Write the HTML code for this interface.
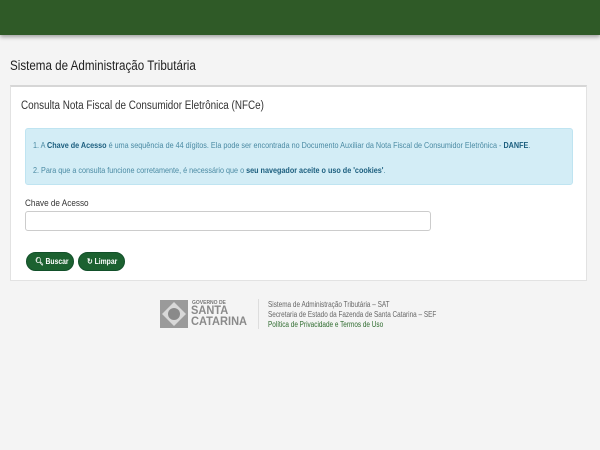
<!DOCTYPE html>
<html><head><meta charset="utf-8"><style>
*{margin:0;padding:0;box-sizing:border-box}
body{width:600px;height:450px;background:#f4f4f4;font-family:"Liberation Sans",sans-serif;position:relative;overflow:hidden;color:#333}
.hdr{position:absolute;left:0;top:0;width:600px;height:35px;background:#2f5a27;box-shadow:0 2px 4px rgba(0,0,0,.35)}
.t{position:absolute;white-space:nowrap;transform-origin:left top;transform:scaleX(.86)}
.panel{position:absolute;left:10px;top:85px;width:577px;height:196px;background:#fff;border:1px solid #e2e2e2;border-top:2px solid #d6d6d6}
.alert{position:absolute;left:25px;top:128px;width:548px;height:57px;background:#d3edf6;border:1px solid #bfe4f1;border-radius:3px}
.alert .t{font-size:8.6px;color:#4a8aa3;transform:scaleX(.84)}
.alert b{color:#1b5e7e}
.inp{position:absolute;left:25px;top:211px;width:406px;height:20px;border:1px solid #ccc;border-radius:3px;background:#fff}
.btn{position:absolute;top:252px;height:19px;background:#1c6130;border:1px solid #12502a;border-radius:10px;color:#fff;font-size:8px;font-weight:bold}
.btn span{position:absolute;top:4px;white-space:nowrap;transform:scaleX(.85);transform-origin:left top}
.ft{font-size:8px;color:#666;transform:scaleX(.8)}
</style></head><body>
<div class="hdr"></div>
<div class="t" style="left:10px;top:58px;font-size:13.5px;color:#222">Sistema de Administração Tributária</div>
<div class="panel"></div>
<div class="t" style="left:21px;top:100px;font-size:11.5px;color:#333">Consulta Nota Fiscal de Consumidor Eletrônica (NFCe)</div>
<div class="alert">
<div class="t" style="left:7px;top:11px">1. A <b>Chave de Acesso</b> é uma sequência de 44 dígitos. Ela pode ser encontrada no Documento Auxiliar da Nota Fiscal de Consumidor Eletrônica - <b>DANFE</b>.</div>
<div class="t" style="left:7px;top:36px">2. Para que a consulta funcione corretamente, é necessário que o <b>seu navegador aceite o uso de 'cookies'</b>.</div>
</div>
<div class="t" style="left:25px;top:198px;font-size:9.5px;color:#333">Chave de Acesso</div>
<div class="inp"></div>
<div class="btn" style="left:26px;width:48px"><span style="left:8px">&#x1F50D;&#xFE0E; Buscar</span></div>
<div class="btn" style="left:78px;width:47px"><span style="left:8px">&#x21BB; Limpar</span></div>
<svg style="position:absolute;left:160px;top:300px" width="28" height="28" viewBox="0 0 28 28"><rect width="28" height="28" fill="#9a9a9a"/><polygon points="14,2 26,14 14,26 2,14" fill="#d8d8d8"/><circle cx="14" cy="14" r="6" fill="#8a8a8a"/></svg>
<div style="position:absolute;left:192px;top:300px;font-size:5px;color:#777;font-weight:bold">GOVERNO DE</div>
<div style="position:absolute;left:191px;top:305px;font-size:12px;line-height:11px;color:#8a8a8a;font-weight:bold;transform:scaleX(.92);transform-origin:left top">SANTA<br>CATARINA</div>
<div style="position:absolute;left:258px;top:299px;width:1px;height:30px;background:#ddd"></div>
<div class="t ft" style="left:268px;top:300px">Sistema de Administração Tributária – SAT</div>
<div class="t ft" style="left:268px;top:310px">Secretaria de Estado da Fazenda de Santa Catarina – SEF</div>
<div class="t ft" style="left:268px;top:320px;color:#2e6b2e">Política de Privacidade e Termos de Uso</div>
</body></html>
